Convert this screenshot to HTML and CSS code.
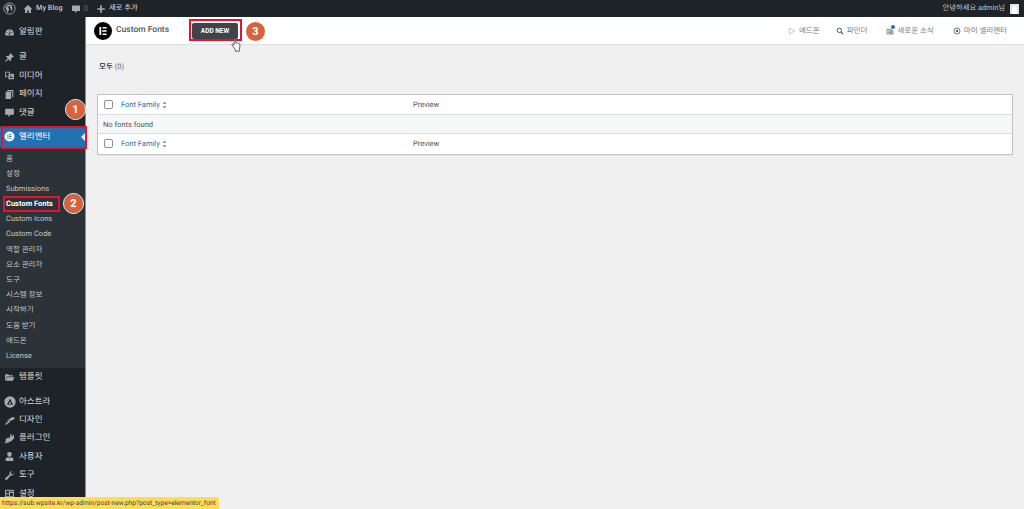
FILE: index.html
```html
<!DOCTYPE html>
<html lang="ko">
<head>
  <meta charset="UTF-8">
  <meta name="viewport" content="width=device-width, initial-scale=1.0">
  <title>Custom Fonts</title>
  <link rel="stylesheet" href="styles.css">
</head>
<body>
  <!-- admin bar -->
  <header class="adminbar">
    <div class="adminbar-left">
      <svg class="bar-logo" viewBox="0 0 20 20"><circle cx="10" cy="10" r="8.6" fill="none" stroke="currentColor" stroke-width="1.4"/><path fill="currentColor" d="M3.4 7.2 7.3 17l2-5.6-1.4-4.2H6.8V6.4h5v.8h-1.1l2.4 7.1 1.3-4c.4-1.3-.3-2.3-.7-3-.3-.5 0-1.3.8-1.3A7.9 7.9 0 0 0 3.9 6.4h3v.8z"/></svg>
      <span class="bar-item">
        <svg class="bar-icon" viewBox="0 0 20 20"><path fill="currentColor" d="M10 2 1 10.500h3V18h4.500v-5h3v5H16v-7.500h3z"/></svg>
        <b>My Blog</b>
      </span>
      <span class="bar-item">
        <svg class="bar-icon" viewBox="0 0 20 20"><path fill="currentColor" d="M3 3h14a1 1 0 0 1 1 1v9a1 1 0 0 1-1 1h-5l-4 4v-4H3a1 1 0 0 1-1-1V4a1 1 0 0 1 1-1z"/></svg>
        <span class="bar-dim">0</span>
      </span>
      <span class="bar-item">
        <svg class="bar-icon" viewBox="0 0 20 20"><path fill="currentColor" d="M8.300 2.500h3.400v5.800h5.800v3.400h-5.800v5.800H8.300v-5.800H2.500V8.300h5.800z"/></svg>
        <b>새로 추가</b>
      </span>
    </div>
    <div class="adminbar-right">
      <span>안녕하세요 admin님</span>
      <span class="avatar"><i></i></span>
    </div>
  </header>

  <div class="layout">
    <!-- sidebar -->
    <nav class="sidebar">
      <ul class="menu menu-first">
        <li class="menu-item">
          <svg class="menu-icon" viewBox="0 0 20 20"><path fill="currentColor" d="M10 4a8 8 0 0 0-8 8c0 1.300.3 2.400.8 3.500h14.400c.5-1.100.8-2.200.8-3.500a8 8 0 0 0-8-8zm0 1.800a1 1 0 1 1 0 2 1 1 0 0 1 0-2zM5 11a1 1 0 1 1 0-2 1 1 0 0 1 0 2zm5 3a1.700 1.700 0 0 1-.8-3.200L13 8l-1.800 4.300A1.700 1.700 0 0 1 10 14zm5-3a1 1 0 1 1 0-2 1 1 0 0 1 0 2z"/></svg>
          알림판
        </li>
      </ul>
      <ul class="menu menu-posts">
        <li class="menu-item">
          <svg class="menu-icon" viewBox="0 0 20 20"><path fill="currentColor" d="M11.500 2 18 8.500l-1.200 1.200-1-.4-3.200 3.200.2 2.800-1.300 1.300-3.300-3.300L3 18l-1-1 4.700-5.500-3.300-3.300 1.300-1.300 2.800.2L10.700 4.900l-.4-1z"/></svg>
          글
        </li>
        <li class="menu-item">
          <svg class="menu-icon" viewBox="0 0 20 20"><path fill="currentColor" d="M2 3h9v3H9.500L8 4.500H3.500v6H6V13H2zm6 4h10v10H8zm2 7.500h6l-2-3.500-1.500 2-1-1zm.5-5a1 1 0 1 0 2 0 1 1 0 0 0-2 0z"/></svg>
          미디어
        </li>
        <li class="menu-item">
          <svg class="menu-icon" viewBox="0 0 20 20"><path fill="currentColor" d="M6 2h11v13h-2V4H6zM3 5h10v13H3z"/></svg>
          페이지
        </li>
        <li class="menu-item">
          <svg class="menu-icon" viewBox="0 0 20 20"><path fill="currentColor" d="M3 3h14a1 1 0 0 1 1 1v9a1 1 0 0 1-1 1h-5l-4 4v-4H3a1 1 0 0 1-1-1V4a1 1 0 0 1 1-1z"/></svg>
          댓글
        </li>
      </ul>
      <ul class="menu menu-elementor">
        <li class="menu-item menu-item-current">
          <svg class="menu-icon" viewBox="0 0 20 20"><circle cx="10" cy="10" r="9" fill="currentColor"/><path fill="#2271b1" d="M6.500 6h1.500v8H6.500zM9.500 6h4v1.500h-4zM9.500 9.250h4v1.500h-4zM9.500 12.500h4V14h-4z"/></svg>
          엘리멘터
        </li>
        <li class="submenu">
          <a>홈</a>
          <a>설정</a>
          <a>Submissions</a>
          <a class="submenu-current">Custom Fonts</a>
          <a>Custom Icons</a>
          <a>Custom Code</a>
          <a>역할 관리자</a>
          <a>요소 관리자</a>
          <a>도구</a>
          <a>시스템 정보</a>
          <a>시작하기</a>
          <a>도움 받기</a>
          <a>애드온</a>
          <a>License</a>
        </li>
        <li class="menu-item">
          <svg class="menu-icon" viewBox="0 0 20 20"><path fill="currentColor" d="M2 4h6l1.500 2H16v2H5.500L3 14.500V16H2zm3.800 5.500H19L16 16H3.200z"/></svg>
          템플릿
        </li>
      </ul>
      <ul class="menu menu-astra">
        <li class="menu-item">
          <svg class="menu-icon menu-icon-astra" viewBox="0 0 20 20"><circle cx="10" cy="10" r="9.500" fill="currentColor"/><path fill="#1d2327" d="M10 4 15 15h-2.300L10 8.800 7.300 15H5zM10 11.500l1.300 3.500H8.700z"/></svg>
          아스트라
        </li>
        <li class="menu-item">
          <svg class="menu-icon" viewBox="0 0 20 20"><path fill="currentColor" d="M19 4v3.500l-7.500 3.500-3.500-3 6-4zM7.200 8.500l4 3.500L9 15 5.800 11.700zM4.800 12.500l3 3L6 17l-2 .3L2 19l1-3 .5-2z"/></svg>
          디자인
        </li>
        <li class="menu-item">
          <svg class="menu-icon" viewBox="0 0 20 20"><path fill="currentColor" d="M12.500 2H14v4h2.500V3H18v5l1 1-5 5-5.500-1zM8 8l5.500 6-1.500 2H9.500L8 17.500H4L2 19l-1-1 2-2v-5z"/></svg>
          플러그인
        </li>
        <li class="menu-item">
          <svg class="menu-icon" viewBox="0 0 20 20"><path fill="currentColor" d="M10 2a4 4 0 0 1 4 4.500c0 2-1.500 4-4 4s-4-2-4-4A4 4 0 0 1 10 2zM3 14.500c0-1.500 2-2.500 4-3 1.800 1 4.200 1 6 0 2 .5 4 1.500 4 3V18H3z"/></svg>
          사용자
        </li>
        <li class="menu-item">
          <svg class="menu-icon" viewBox="0 0 20 20"><path fill="currentColor" d="M18 6a4.500 4.500 0 0 1-6 4.200L5 18l-2.500-.5L2 15l8-7a4.500 4.500 0 0 1 5.200-5.700L12.500 5l.5 2.500 2.500.5L18 5.500z"/></svg>
          도구
        </li>
        <li class="menu-item">
          <svg class="menu-icon" viewBox="0 0 20 20"><path fill="currentColor" fill-rule="evenodd" d="M2 3h16v14H2zm2 2v4.500h5V5zm7 0v2h5V5zm0 4v6h5V9zm-7 2.500V15h5v-3.500z"/></svg>
          설정
        </li>
      </ul>
    </nav>

    <div class="content">
      <!-- elementor top bar -->
      <div class="topbar">
        <div class="topbar-title">
          <svg class="el-logo" viewBox="0 0 20 20"><circle cx="10" cy="10" r="10" fill="#000"/><path fill="#fff" d="M6 5.500h2v9H6zM9.500 5.500H14v1.800H9.500zM9.100 9.100H14v1.800H9.100zM9.500 12.700H14v1.800H9.500z"/></svg>
          <span class="title-text">Custom Fonts</span>
          <button class="add-new">ADD NEW</button>
        </div>
        <div class="topbar-links">
          <span class="topbar-link link-addons">
            <svg class="link-icon" viewBox="0 0 12 12"><path fill="none" stroke="currentColor" d="M2 1.500v9l8-4.500z"/></svg>
            애드온
          </span>
          <span class="topbar-link">
            <svg class="link-icon link-icon-dark" viewBox="0 0 12 12"><circle cx="5" cy="5" r="3.300" fill="none" stroke="currentColor" stroke-width="1.500"/><path stroke="currentColor" stroke-width="1.700" d="m7.500 7.500 3 3"/></svg>
            파인더
          </span>
          <span class="topbar-link link-news">
            <svg class="link-icon link-icon-dark" viewBox="0 0 12 12"><path fill="none" stroke="currentColor" d="M1.500 3.500h6v7h-6zM7.500 5.500h3v5h-3z"/><path stroke="currentColor" d="M3 6h3M3 8h3"/></svg>
            <i class="news-dot"></i>
            새로운 소식
          </span>
          <span class="topbar-link">
            <svg class="link-icon link-icon-dark" viewBox="0 0 12 12"><circle cx="6" cy="6" r="4.500" fill="none" stroke="currentColor" stroke-width="1.200"/><circle cx="6" cy="6" r="1.800" fill="currentColor"/></svg>
            마이 엘리멘터
          </span>
        </div>
      </div>

      <main class="page">
        <p class="filter"><b>모두</b> <span>(0)</span></p>

        <div class="fonts-table">
          <div class="row row-head">
            <span class="check"></span>
            <a class="col-name">Font Family
              <svg class="sort" viewBox="0 0 8 12"><path fill="#8c8f94" d="M4 0.500 7 4.500H1zM4 11.500 1 7.500h6z"/></svg>
            </a>
            <span class="col-preview">Preview</span>
          </div>
          <div class="row row-empty">No fonts found</div>
          <div class="row row-foot">
            <span class="check"></span>
            <a class="col-name">Font Family
              <svg class="sort" viewBox="0 0 8 12"><path fill="#8c8f94" d="M4 0.500 7 4.500H1zM4 11.500 1 7.500h6z"/></svg>
            </a>
            <span class="col-preview">Preview</span>
          </div>
        </div>
      </main>
    </div>
  </div>

  <!-- screenshot annotations -->
  <span class="mark mark-elementor"></span>
  <span class="mark mark-fonts"></span>
  <span class="mark mark-add"></span>
  <span class="badge badge-1">1</span>
  <span class="badge badge-2">2</span>
  <span class="badge badge-3">3</span>
  <svg class="hand" viewBox="0 0 14 18"><path fill="#fff" stroke="#333" stroke-width="1" stroke-linejoin="round" d="M4 1.500c.7-.7 1.800-.4 2 .6v4.400c.6-.5 1.400-.4 1.800.2.600-.4 1.400-.2 1.700.4.700-.3 1.500.1 1.700.9.300 2 .2 4.200-.6 6.500v2.500H5.500v-2C4 13 2.500 11 1.200 8.800c-.4-.8.500-1.700 1.300-1.100L4 9z"/></svg>

  <div class="status-url">https://sub.wpsite.kr/wp-admin/post-new.php?post_type=elementor_font</div>
</body>
</html>
```

FILE: styles.css
```css
:root {
  --bar-bg: #1d2327;
  --sub-bg: #2c3338;
  --menu-text: #f0f0f1;
  --sub-text: #c3c4c7;
  --wp-blue: #2271b1;
  --link: #2271b1;
  --border: #c3c4c7;
  --text: #50575e;
  --mark: #e8112d;
}

* {
  margin: 0;
  padding: 0;
  box-sizing: border-box;
}

html, body {
  height: 100%;
  overflow: hidden;
}

body {
  font-family: Roboto, "Noto Sans CJK KR", sans-serif;
  font-size: 8px;
  line-height: 1.2;
  text-rendering: geometricPrecision;
  background-color: #f0f0f1;
  color: var(--text);
  display: flex;
  flex-direction: column;
}

/* admin bar */
.adminbar {
  height: 17px;
  flex: none;
  background-color: var(--bar-bg);
  color: #c3c4c7;
  display: flex;
  justify-content: space-between;
  align-items: center;
  padding: 0 5px 0 3px;
}

.adminbar-left, .adminbar-right, .bar-item {
  display: flex;
  align-items: center;
}

.bar-logo {
  width: 13px;
  height: 13px;
  color: #a7aaad;
  margin-right: 7px;
}

.bar-item {
  gap: 3px;
  margin-right: 8px;
}

.bar-item b {
  font-size: 7.300px;
  font-weight: 500;
  color: #c3c4c7;
}

.bar-icon {
  width: 10px;
  height: 10px;
  color: #a7aaad;
}

.bar-dim {
  color: #646970;
}

.adminbar-right {
  gap: 5px;
  font-size: 7.300px;
}

.avatar {
  width: 9px;
  height: 10px;
  background-color: #e4e4e4;
  display: block;
  position: relative;
  overflow: hidden;
}

.avatar i {
  position: absolute;
  left: 2px;
  top: 2px;
  width: 5px;
  height: 9px;
  border-radius: 3px;
  background-color: #fff;
}

.layout {
  flex: 1;
  display: flex;
  min-height: 0;
}

/* sidebar */
.sidebar {
  width: 86px;
  flex: none;
  background-color: var(--bar-bg);
  border-right: 1px solid #8c8f94;
  overflow: hidden;
  color: var(--menu-text);
}

.menu {
  list-style: none;
  margin-bottom: 7px;
}

.menu-first {
  margin-top: 6px;
}

.menu-posts {
  margin-bottom: 5px;
}

.menu-elementor {
  margin-bottom: 6px;
}

.menu-item {
  height: 18.400px;
  display: flex;
  align-items: center;
  gap: 4px;
  padding-left: 4px;
  font-size: 8.500px;
  color: #dcdcde;
}

.menu-icon {
  width: 11px;
  height: 11px;
  color: #a7aaad;
  flex: none;
}

.menu-icon-astra {
  width: 12px;
  height: 12px;
  margin-right: -1px;
}

.menu-item-current {
  height: 20px;
  background-color: var(--wp-blue);
  color: #fff;
  position: relative;
}

.menu-item-current .menu-icon {
  color: #fff;
}

.menu-item-current::after {
  content: "";
  position: absolute;
  right: 0;
  top: 6px;
  border: 4px solid transparent;
  border-right-color: #f0f0f1;
  border-left-width: 0;
}

.submenu {
  list-style: none;
  background-color: var(--sub-bg);
  padding: 3.500px 0 5px;
  margin-bottom: 0;
}

.submenu a {
  display: flex;
  align-items: center;
  height: 15.200px;
  padding-left: 6px;
  font-size: 7.500px;
  color: var(--sub-text);
}

.submenu .submenu-current {
  color: #fff;
  font-weight: 700;
}

/* right side */
.content {
  flex: 1;
  min-width: 0;
  display: flex;
  flex-direction: column;
}

.topbar {
  height: 27px;
  flex: none;
  background-color: #fff;
  box-shadow: 0 1px 1px rgba(0, 0, 0, 0.06);
  display: flex;
  justify-content: space-between;
  align-items: center;
  padding: 0 17px 0 8px;
}

.topbar-title {
  display: flex;
  align-items: center;
  font-size: 8.500px;
  font-weight: 500;
  color: #50575e;
}

.el-logo {
  width: 18px;
  height: 18px;
  margin-right: 4px;
}

.title-text {
  width: 76px;
}

.add-new {
  width: 46px;
  height: 16px;
  border: none;
  border-radius: 2px;
  background-color: #3f444b;
  color: #fff;
  font-family: inherit;
  font-size: 6.500px;
  font-weight: 700;
}

.topbar-links {
  display: flex;
  gap: 19px;
  font-size: 7.500px;
  color: #787c82;
}

.topbar-link {
  display: flex;
  align-items: center;
  gap: 3px;
  position: relative;
}

.link-addons {
  margin-right: -3px;
}

.link-icon {
  width: 8px;
  height: 8px;
  color: #a7aaad;
}

.link-icon-dark {
  color: #50575e;
}

.news-dot {
  position: absolute;
  left: 5px;
  top: -1px;
  width: 4px;
  height: 4px;
  border-radius: 50%;
  background-color: #1d6fd1;
}

.page {
  padding: 18px 11px 0;
}

.filter {
  font-size: 7.500px;
  color: #646970;
  margin-bottom: 22px;
  margin-left: 2px;
  height: 10px;
}

.filter b {
  color: #1d2327;
  font-weight: 500;
}

/* table */
.fonts-table {
  background-color: #fff;
  border: 1px solid #c3c4c7;
  box-shadow: 0 1px 1px rgba(0, 0, 0, 0.04);
}

.row {
  height: 19px;
  display: flex;
  align-items: center;
  padding-left: 6px;
  font-size: 7.500px;
  color: var(--text);
}

.row-empty {
  background-color: #f6f7f7;
  border-top: 1px solid #dcdcde;
  border-bottom: 1px solid #dcdcde;
  height: 20px;
  padding-left: 5px;
  color: #50575e;
}

.row-foot {
  height: 19.500px;
}

.check {
  width: 9px;
  height: 9px;
  flex: none;
  background-color: #fff;
  border: 1px solid #8c8f94;
  border-radius: 2px;
}

.col-name {
  width: 292px;
  margin-left: 8px;
  color: var(--link);
  display: flex;
  align-items: center;
  gap: 2px;
}

.sort {
  width: 5px;
  height: 8px;
}

.col-preview {
  color: #50575e;
}

/* annotations */
.mark {
  position: absolute;
  border: 2px solid var(--mark);
  pointer-events: none;
}

.mark-elementor {
  left: 1px;
  top: 126px;
  width: 86px;
  height: 23px;
}

.mark-fonts {
  left: 3px;
  top: 196px;
  width: 57px;
  height: 16px;
}

.mark-add {
  left: 189px;
  top: 19px;
  width: 53px;
  height: 22px;
}

.badge {
  position: absolute;
  width: 21px;
  height: 21px;
  border-radius: 50%;
  background-color: #d9623c;
  background-clip: padding-box;
  border: 1.500px solid #fff;
  color: #fff;
  font-size: 11px;
  font-weight: 700;
  display: flex;
  align-items: center;
  justify-content: center;
}

.badge-1 {
  left: 65px;
  top: 99px;
}

.badge-2 {
  left: 63px;
  top: 193px;
}

.badge-3 {
  left: 245px;
  top: 21px;
  border-color: transparent;
}

.hand {
  position: absolute;
  left: 231px;
  top: 38px;
  width: 11px;
  height: 14px;
}

.status-url {
  position: absolute;
  left: 0;
  bottom: 0;
  width: 219px;
  height: 12px;
  background-color: #ffdb58;
  border-radius: 0 2px 0 0;
  color: #3c434a;
  font-size: 6.600px;
  line-height: 12px;
  padding-left: 2px;
  white-space: nowrap;
  overflow: hidden;
}
```
